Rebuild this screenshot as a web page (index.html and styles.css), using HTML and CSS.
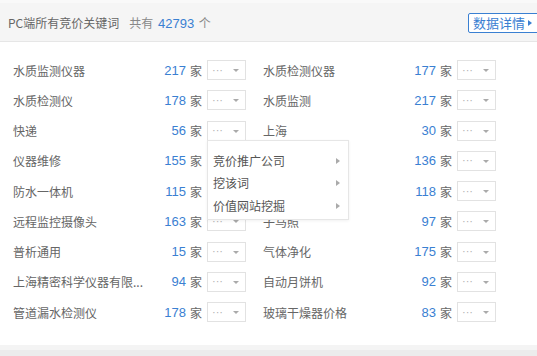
FILE: index.html
```html
<!DOCTYPE html>
<html lang="zh-CN">
<head>
    <meta charset="UTF-8">
    <title>PC端所有竞价关键词</title>
    <link rel="stylesheet" href="styles.css">
</head>
<body>
    <div class="panel">
        <div class="panel-head">
            <span class="title">PC端所有竞价关键词</span>
            <span class="total">共有 <em>42793</em> 个</span>
            <a class="detail-btn" href="#">数据详情<i class="tri"></i></a>
        </div>

        <div class="words">
            <div class="word"><span class="name">水质监测仪器</span><span class="num">217</span><span class="unit">家</span><span class="pick"><b>···</b><i class="caret"></i></span></div>
            <div class="word"><span class="name">水质检测仪器</span><span class="num">177</span><span class="unit">家</span><span class="pick"><b>···</b><i class="caret"></i></span></div>

            <div class="word"><span class="name">水质检测仪</span><span class="num">178</span><span class="unit">家</span><span class="pick"><b>···</b><i class="caret"></i></span></div>
            <div class="word"><span class="name">水质监测</span><span class="num">217</span><span class="unit">家</span><span class="pick"><b>···</b><i class="caret"></i></span></div>

            <div class="word"><span class="name">快递</span><span class="num">56</span><span class="unit">家</span><span class="pick open"><b>···</b><i class="caret"></i>
                <ul class="menu">
                    <li>竞价推广公司<i class="arrow"></i></li>
                    <li>挖该词<i class="arrow"></i></li>
                    <li>价值网站挖掘<i class="arrow"></i></li>
                </ul>
            </span></div>
            <div class="word"><span class="name">上海</span><span class="num">30</span><span class="unit">家</span><span class="pick"><b>···</b><i class="caret"></i></span></div>

            <!-- rows 4 and 5: the open menu covers the select and the right name -->
            <div class="word"><span class="name">仪器维修</span><span class="num">155</span><span class="unit">家</span><span class="pick"></span></div>
            <div class="word"><span class="name"></span><span class="num">136</span><span class="unit">家</span><span class="pick"><b>···</b><i class="caret"></i></span></div>

            <div class="word"><span class="name">防水一体机</span><span class="num">115</span><span class="unit">家</span><span class="pick"></span></div>
            <div class="word"><span class="name"></span><span class="num">118</span><span class="unit">家</span><span class="pick"><b>···</b><i class="caret"></i></span></div>

            <div class="word"><span class="name">远程监控摄像头</span><span class="num">163</span><span class="unit">家</span><span class="pick"><b>···</b><i class="caret"></i></span></div>
            <div class="word"><span class="name">子马照</span><span class="num">97</span><span class="unit">家</span><span class="pick"><b>···</b><i class="caret"></i></span></div>

            <div class="word"><span class="name">普析通用</span><span class="num">15</span><span class="unit">家</span><span class="pick"><b>···</b><i class="caret"></i></span></div>
            <div class="word"><span class="name">气体净化</span><span class="num">175</span><span class="unit">家</span><span class="pick"><b>···</b><i class="caret"></i></span></div>

            <div class="word"><span class="name" title="上海精密科学仪器有限公司">上海精密科学仪器有限...</span><span class="num">94</span><span class="unit">家</span><span class="pick"><b>···</b><i class="caret"></i></span></div>
            <div class="word"><span class="name">自动月饼机</span><span class="num">92</span><span class="unit">家</span><span class="pick"><b>···</b><i class="caret"></i></span></div>

            <div class="word"><span class="name">管道漏水检测仪</span><span class="num">178</span><span class="unit">家</span><span class="pick"><b>···</b><i class="caret"></i></span></div>
            <div class="word"><span class="name">玻璃干燥器价格</span><span class="num">83</span><span class="unit">家</span><span class="pick"><b>···</b><i class="caret"></i></span></div>
        </div>
    </div>
</body>
</html>
```

FILE: styles.css
```css
* {
    margin: 0;
    padding: 0;
    box-sizing: border-box;
}

body {
    font-family: "Noto Sans CJK SC", "Noto Sans", sans-serif;
    font-size: 12px;
    color: #666;
    background-color: #ececec;
    height: 356px;
    overflow: hidden;
}

.panel {
    background-color: #fff;
    border-top: 3px solid #f9f9f9;
    border-bottom: 5px solid #f4f4f4;
    height: 350px;
}

.panel-head {
    height: 39px;
    background-color: #f5f5f5;
    border-bottom: 1px solid #e6e6e6;
    display: flex;
    align-items: center;
    padding-left: 8px;
    position: relative;
}

.title {
    font-size: 12px;
    color: #666;
}

.total {
    margin-left: 10px;
    color: #888;
}

.total em {
    font-style: normal;
    font-family: "Liberation Sans", Arial, sans-serif;
    font-size: 13px;
    color: #3a80d2;
    margin: 0 2px;
}

.detail-btn {
    position: absolute;
    left: 468px;
    top: 10px;
    height: 20px;
    padding: 0 6px 0 4px;
    border: 1px solid #3a80d2;
    border-radius: 2px;
    background-color: #fff;
    color: #3a80d2;
    font-size: 13px;
    line-height: 18px;
    text-decoration: none;
    display: flex;
    align-items: center;
    white-space: nowrap;
}

.tri {
    display: inline-block;
    margin-left: 3px;
    border-left: 4px solid #3a80d2;
    border-top: 3px solid transparent;
    border-bottom: 3px solid transparent;
}

.words {
    display: grid;
    grid-template-columns: 233px 233px;
    column-gap: 17px;
    padding: 13px 0 0 13px;
}

.word {
    height: 30.25px;
    display: flex;
    align-items: center;
}

.name {
    flex: 1;
    min-width: 0;
    white-space: nowrap;
    color: #666;
}

.num {
    margin-left: auto;
    font-family: "Liberation Sans", Arial, sans-serif;
    font-size: 13px;
    color: #3a80d2;
    margin-right: 4px;
}

.unit {
    color: #666;
    margin-right: 5px;
}

.pick {
    position: relative;
    width: 39px;
    height: 20px;
    border: 1px solid #e2e2e2;
    background-color: #fff;
    display: flex;
    align-items: center;
    padding-left: 4px;
}

.pick b {
    font-weight: normal;
    font-family: "Liberation Sans", Arial, sans-serif;
    color: #b0b0b0;
    font-size: 11px;
    line-height: 1;
}

.caret {
    position: absolute;
    right: 6px;
    top: 8px;
    border-top: 3px solid #aaa;
    border-left: 3px solid transparent;
    border-right: 3px solid transparent;
}

.menu {
    list-style: none;
    position: absolute;
    left: -1px;
    top: 18px;
    width: 142px;
    height: 80px;
    padding-top: 9px;
    background-color: #fff;
    border: 1px solid #e6e6e6;
    box-shadow: 0 1px 3px rgba(0, 0, 0, 0.06);
    z-index: 5;
}

.menu li {
    position: relative;
    height: 22.5px;
    line-height: 22.5px;
    padding-left: 5px;
    color: #555;
    font-size: 12px;
    white-space: nowrap;
}

.arrow {
    position: absolute;
    right: 8px;
    top: 8px;
    border-left: 4px solid #aaa;
    border-top: 3px solid transparent;
    border-bottom: 3px solid transparent;
}
```
